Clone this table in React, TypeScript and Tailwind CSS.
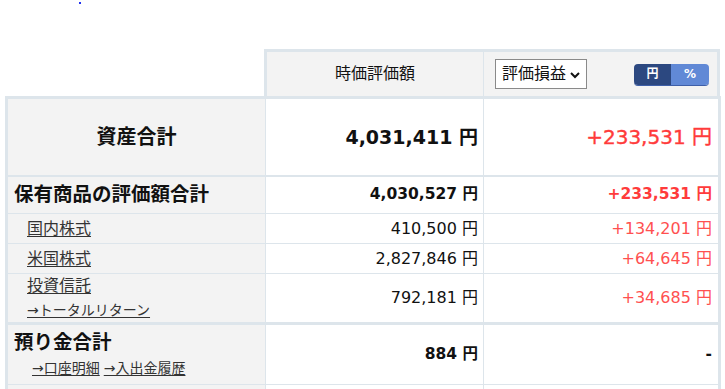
import React from 'react';

const font = { fontFamily: '"DejaVu Sans", "Noto Sans CJK JP", sans-serif' };

interface RowProps {
  label: React.ReactNode;
  value: React.ReactNode;
  gain: React.ReactNode;
  className: string;
}

const Row = ({ label, value, gain, className }: RowProps) => (
  <div className={`flex border-[#dde5eb] ${className}`}>
    <div className="w-[258px] bg-[#f3f3f3] border-r border-[#dde5eb] flex flex-col justify-center">{label}</div>
    <div className="w-[218px] bg-white border-r border-[#dde5eb] flex items-center justify-end pr-[5px]">{value}</div>
    <div className="w-[233px] bg-white flex items-center justify-end pr-[5px]">{gain}</div>
  </div>
);

const Sub = ({ children, small }: { children: React.ReactNode; small?: boolean }) => (
  <a className={`${small ? 'text-[14px]' : 'text-[16px]'} text-[#333] underline underline-offset-2 decoration-1`}>{children}</a>
);

export default function App() {
  return (
    <div className="w-[725px] h-[389px] overflow-hidden bg-white relative text-[#111]" style={font}>
      <div className="absolute left-[79px] top-[2px] w-[2px] h-[2px] bg-[#2233ee]" />
      <div className="pt-[49px] pl-[5px]">
        {/* Header */}
        <div className="flex">
          <div className="w-[259px]" />
          <div className="flex border-t-[3px] border-l-[3px] border-r-[3px] border-[#dde5eb] h-[47px] bg-[#f3f3f3]">
            <div className="w-[217px] border-r border-[#dde5eb] flex items-center justify-center text-[16px]">時価評価額</div>
            <div className="w-[233px] flex items-center pl-[11px]">
              <div className="w-[92px] h-[30px] border border-[#8a8a8a] bg-white flex items-center pl-[6px] gap-[3px] text-[16px]">
                <span>評価損益</span>
                <svg width="12" height="12" viewBox="0 0 12 12" className="mt-[1px]">
                  <path d="M2 4l4 4 4-4" fill="none" stroke="#111" strokeWidth="2" />
                </svg>
              </div>
              <div className="ml-[47px] flex h-[21px] rounded-[4px] overflow-hidden text-[12px] text-white font-bold shadow-[0_1px_0_#3e5fa8]">
                <div className="w-[37px] bg-[#2c4880] flex items-center justify-center">円</div>
                <div className="w-[38px] bg-[#6189d6] flex items-center justify-center">%</div>
              </div>
            </div>
          </div>
        </div>

        {/* Body */}
        <div className="w-[716px] border-t-[3px] border-l-[3px] border-r-[3px] border-[#dde5eb]">
          <Row
            className="h-[78px] border-b-2"
            label={<span className="text-center text-[20px] font-bold">資産合計</span>}
            value={<span className="text-[19px] font-bold">4,031,411 円</span>}
            gain={<span className="text-[20px] text-[#ff3b3b] [-webkit-text-stroke:0.4px_#ff3b3b]">+233,531 円</span>}
          />
          <Row
            className="h-[37px] border-b"
            label={<span className="pl-[6px] text-[19.5px] font-bold">保有商品の評価額合計</span>}
            value={<span className="text-[15.5px] font-bold">4,030,527 円</span>}
            gain={<span className="text-[15.5px] font-bold text-[#ff3b3b]">+233,531 円</span>}
          />
          <Row
            className="h-[30px] border-b"
            label={<span className="pl-[19px]"><Sub>国内株式</Sub></span>}
            value={<span className="text-[16px]">410,500 円</span>}
            gain={<span className="text-[16px] text-[#ff5050]">+134,201 円</span>}
          />
          <Row
            className="h-[30px] border-b"
            label={<span className="pl-[19px]"><Sub>米国株式</Sub></span>}
            value={<span className="text-[16px]">2,827,846 円</span>}
            gain={<span className="text-[16px] text-[#ff5050]">+64,645 円</span>}
          />
          <Row
            className="h-[51px] border-b-[3px]"
            label={
              <div className="pl-[19px] flex flex-col gap-[3px] leading-[21px]">
                <span><Sub>投資信託</Sub></span>
                <span><Sub small>→トータルリターン</Sub></span>
              </div>
            }
            value={<span className="text-[16px]">792,181 円</span>}
            gain={<span className="text-[16px] text-[#ff5050]">+34,685 円</span>}
          />
          <Row
            className="h-[60px] border-b"
            label={
              <div className="pl-[6px] flex flex-col gap-[4px]">
                <span className="text-[19.5px] font-bold leading-[22px]">預り金合計</span>
                <span className="pl-[18px] flex gap-[4px] leading-[20px]">
                  <Sub small>→口座明細</Sub>
                  <Sub small>→入出金履歴</Sub>
                </span>
              </div>
            }
            value={<span className="text-[15.5px] font-bold">884 円</span>}
            gain={<span className="text-[15.5px] font-bold">-</span>}
          />
          <Row className="h-[30px]" label={<span />} value={<span />} gain={<span />} />
        </div>
      </div>
    </div>
  );
}
